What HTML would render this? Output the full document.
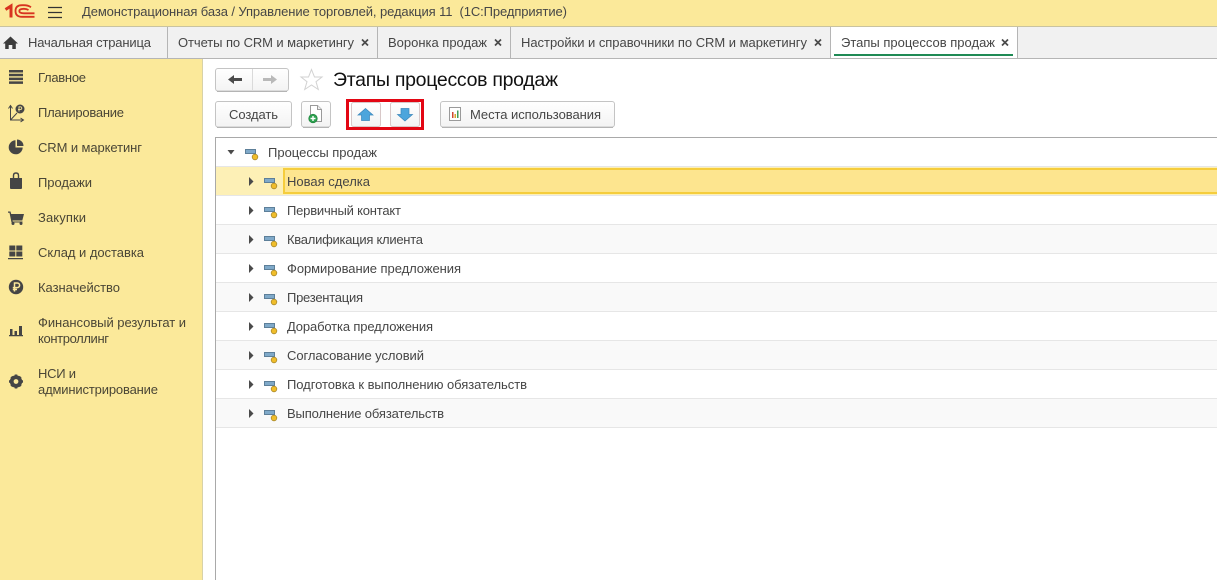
<!DOCTYPE html>
<html lang="ru"><head><meta charset="utf-8"><title>Этапы процессов продаж</title>
<style>
html,body{margin:0;padding:0;background:#fff;width:1217px;height:580px;overflow:hidden}
svg{display:block}
text{font-family:"Liberation Sans",sans-serif;font-size:13px;fill:#464646}
.s text{fill:#4a4636}
</style></head><body>
<svg width="1217" height="580" viewBox="0 0 1217 580" xmlns="http://www.w3.org/2000/svg">
<defs>
<linearGradient id="b" x1="0" y1="0" x2="0" y2="1"><stop offset="0" stop-color="#fff"/><stop offset="1" stop-color="#f3f3f3"/></linearGradient>
<g id="ic"><rect x="-4.500" y="-1.500" width="10" height="4" fill="#7fa9c9" stroke="#5d7f99" stroke-width="1"/><circle cx="5" cy="6" r="2.800" fill="#f0bd2a" stroke="#a98a2c" stroke-width=".8"/></g>
</defs>

<!-- header -->
<rect width="1217" height="26" fill="#fbe99a"/>
<rect y="26" width="1217" height="1" fill="#c9c3a0"/>
<g fill="none" stroke="#d8331f">
<path d="M5.500 9.500L11 6V17.500" stroke-width="3"/>
<path d="M31 7.200Q28 5.200 24 5.200H22Q15.500 5.200 15.500 11Q15.500 16.800 22 16.800H34.500" stroke-width="1.800"/>
<path d="M28.500 10Q26.500 8.800 24 8.800Q19.300 8.800 19.300 11Q19.300 13.300 24 13.300H34.500" stroke-width="1.800"/>
</g>
<path d="M48 7.500H62M48 12.500H62M48 17.500H62" stroke="#333" stroke-width="1.200" fill="none"/>
<text x="82" y="16" textLength="485" lengthAdjust="spacing">Демонстрационная база / Управление торговлей, редакция 11 &#160;(1С:Предприятие)</text>

<!-- tabs -->
<rect y="27" width="1217" height="31" fill="#f1f1f1"/>
<rect x="830" y="27" width="187" height="31" fill="#fff"/>
<rect y="58" width="1217" height="1" fill="#b5b5b5"/>
<path d="M167.500 27V58M377.500 27V58M510.500 27V58M830.500 27V58M1017.500 27V58" stroke="#b5b5b5" fill="none"/>
<path d="M3 43.500L10.500 36.500L18 43.500H15.800V49H12.300V45H8.700V49H5.200V43.500Z" fill="#3c3c3c"/>
<text x="28" y="47" textLength="123" lengthAdjust="spacing">Начальная страница</text>
<text x="178" y="47" textLength="176" lengthAdjust="spacing">Отчеты по CRM и маркетингу</text>
<text x="388" y="47" textLength="99" lengthAdjust="spacing">Воронка продаж</text>
<text x="521" y="47" textLength="286" lengthAdjust="spacing">Настройки и справочники по CRM и маркетингу</text>
<text x="841" y="47" textLength="154" lengthAdjust="spacing">Этапы процессов продаж</text>
<g stroke="#4a4a4a" stroke-width="1.700" fill="none">
<path d="M362 39.500l6 6m0-6l-6 6"/><path d="M495 39.500l6 6m0-6l-6 6"/><path d="M815 39.500l6 6m0-6l-6 6"/><path d="M1002 39.500l6 6m0-6l-6 6"/>
</g>
<rect x="834" y="54" width="179" height="2" fill="#1f8a55"/>

<!-- sidebar -->
<rect y="59" width="202" height="521" fill="#fbe99a"/>
<rect x="202" y="59" width="1" height="521" fill="#d8d2a8"/>
<g fill="#454545">
<!-- main -->
<path d="M9 70h14v2.500H9zM9 73.800h14v2.500H9zM9 77.600h14v2.500H9zM9 81.400h14v2.500H9z"/>
<!-- planning coin -->
<circle cx="20" cy="109" r="4.500"/>
<!-- bag -->
<path d="M10 178H22V188Q22 189 21 189H11Q10 189 10 188Z"/>
<!-- cart -->
<path d="M8 211.500H10.500L11.200 214H24L22.300 220.500H12.500L12.800 221.500H22.500V222.500H11.500L9.500 212.800H8Z"/>
<circle cx="13" cy="223.500" r="1.500"/><circle cx="21" cy="223.500" r="1.500"/>
<!-- warehouse -->
<path d="M9.300 245.500h6v5h-6zM16.300 245.500h6v5h-6zM9.300 251.500h6v5h-6zM16.300 251.500h6v5h-6zM8 258h15v1.300H8z"/>
<!-- ruble -->
<circle cx="16" cy="287" r="7.200"/>
<!-- bars -->
<path d="M10 329h2.500v6H10zM14.500 331h2.500v4h-2.500zM19 326h3v9h-3zM9 335h14v1.200H9z"/>
<!-- pie -->
<path d="M15.500 147.500V140.300A7 7 0 1 0 22.700 147.500Z"/>
<path d="M17 146V139.500A6.500 6.500 0 0 1 23.500 146Z"/>
</g>
<g fill="none" stroke="#454545">
<path d="M10.500 106V120H23" stroke-width="1"/>
<path d="M8.500 108.500L10.500 105.500L12.500 108.500M20.500 118L23.500 120L20.500 122M10.500 120L17 113" stroke-width="1"/>
<path d="M13.500 178.500V175.500Q13.500 173 16 173Q18.500 173 18.500 175.500V178.500" stroke-width="1.400"/>
</g>
<path d="M14.500 291.500V283H17.300a2.300 2.300 0 0 1 0 4.600H12.800M12.800 289.500H17" stroke="#fbe99a" stroke-width="1.500" fill="none"/>
<path d="M19 111.500V106.800H20.500a1.300 1.300 0 0 1 0 2.600H18" stroke="#fbe99a" fill="none" stroke-width=".9"/>
<g transform="translate(16 381.500)"><circle r="4.300" fill="none" stroke="#454545" stroke-width="3.800"/><path d="M-1.300-7h2.600v2.500h-2.600zM-1.300 4.500h2.600V7h-2.600zM-7-1.300h2.500v2.600H-7zM4.500-1.300H7v2.600H4.500zM-5.600-3.800L-3.800-5.600-2.300-4-4-2.300zM3.800-5.600L5.600-3.800 4-2.300 2.300-4zM-5.600 3.800L-3.800 5.600-2.300 4-4 2.300zM3.800 5.600L5.600 3.800 4 2.300 2.300 4z" fill="#454545"/></g>
<g class="s">
<text x="38" y="82" textLength="48" lengthAdjust="spacing">Главное</text>
<text x="38" y="117" textLength="86" lengthAdjust="spacing">Планирование</text>
<text x="38" y="152" textLength="104" lengthAdjust="spacing">CRM и маркетинг</text>
<text x="38" y="187" textLength="54" lengthAdjust="spacing">Продажи</text>
<text x="38" y="222" textLength="48" lengthAdjust="spacing">Закупки</text>
<text x="38" y="257" textLength="106" lengthAdjust="spacing">Склад и доставка</text>
<text x="38" y="292" textLength="82" lengthAdjust="spacing">Казначейство</text>
<text x="38" y="327" textLength="148" lengthAdjust="spacing">Финансовый результат и</text>
<text x="38" y="343" textLength="71" lengthAdjust="spacing">контроллинг</text>
<text x="38" y="378" textLength="38" lengthAdjust="spacing">НСИ и</text>
<text x="38" y="394" textLength="120" lengthAdjust="spacing">администрирование</text>
</g>

<!-- toolbar row 1 -->
<rect x="215.500" y="68.500" width="73" height="22.500" rx="2.500" fill="url(#b)" stroke="#c4c4c4"/>
<path d="M217 91.500H287" stroke="#b4b4b4"/>
<path d="M252.500 69V90" stroke="#dadada"/>
<path d="M228 79.500L234 75V78H242V81H234V84Z" fill="#4a4a4a"/>
<path d="M277 79.500L271 75V78H263V81H271V84Z" fill="#b9b9b9"/>
<path d="M311.500 69.500L314.500 77H322L316 81.700L318.300 89.500L311.500 85L304.700 89.500L307 81.700L301 77H308.500Z" fill="#fff" stroke="#d2d2d2"/>
<text x="333" y="86" textLength="225" lengthAdjust="spacing" style="font-size:19.500px;fill:#111">Этапы процессов продаж</text>

<!-- toolbar row 2 -->
<rect x="215.500" y="101.500" width="76" height="25.500" rx="2.500" fill="url(#b)" stroke="#c4c4c4"/><path d="M217 127.500H290" stroke="#b4b4b4"/>
<text x="229" y="119" textLength="49" lengthAdjust="spacing">Создать</text>
<rect x="301.500" y="101.500" width="29" height="25.500" rx="2.500" fill="url(#b)" stroke="#c4c4c4"/><path d="M303 127.500H329" stroke="#b4b4b4"/>
<path d="M310.500 105.500H317.500L321.500 109.500V121.500H310.500Z" fill="#fff" stroke="#9a9a9a"/><path d="M317.500 105.500V109.500H321.500" fill="#eee" stroke="#9a9a9a"/>
<circle cx="313" cy="118.500" r="4.300" fill="#2ca14f" stroke="#1c7f3a" stroke-width=".6"/><path d="M310.500 118.500h5M313 116v5" stroke="#fff" stroke-width="1.400"/>

<rect x="351.500" y="102.500" width="29" height="24" rx="2" fill="url(#b)" stroke="#d8c8c8"/>
<rect x="390.500" y="102.500" width="29" height="24" rx="2" fill="url(#b)" stroke="#d8c8c8"/>
<path d="M365.500 108.500L373 115H369.500V120.500H361.500V115H358Z" fill="#4ca5dc" stroke="#3a86bb" stroke-width=".7"/>
<path d="M405 121L412.500 114.500H409V108.500H401V114.500H397.500Z" fill="#4ca5dc" stroke="#3a86bb" stroke-width=".7"/>
<rect x="347.500" y="100.500" width="75" height="28" fill="none" stroke="#e30613" stroke-width="3"/>

<rect x="440.500" y="101.500" width="174" height="25.500" rx="2.500" fill="url(#b)" stroke="#c4c4c4"/><path d="M442 127.500H613" stroke="#b4b4b4"/>
<rect x="449.500" y="107.500" width="11" height="13" fill="#fff" stroke="#9a9a9a"/>
<path d="M452 112h1.500v6H452z" fill="#d04a35"/><path d="M454.500 114h1.500v4h-1.500z" fill="#d9a62b"/><path d="M457 110.500h1.500v7.500H457z" fill="#3f9e5a"/>
<text x="470" y="119" textLength="131" lengthAdjust="spacing">Места использования</text>

<!-- tree table -->
<rect x="215" y="137" width="1002" height="1" fill="#a9a9a9"/>
<rect x="215" y="137" width="1" height="443" fill="#a9a9a9"/>
<rect x="216" y="166" width="1001" height="1" fill="#e6e6e6"/>
<!-- rows -->
<rect x="216" y="167" width="1001" height="28" fill="#fdf0b6"/>
<rect x="284" y="168" width="933" height="26" fill="#fde58f"/>
<path d="M1217 169H284V193H1217" fill="none" stroke="#f5cd3d" stroke-width="2"/>
<rect x="216" y="225" width="1001" height="28" fill="#f9f9f9"/>
<rect x="216" y="283" width="1001" height="28" fill="#f9f9f9"/>
<rect x="216" y="341" width="1001" height="28" fill="#f9f9f9"/>
<rect x="216" y="399" width="1001" height="28" fill="#f9f9f9"/>
<path d="M216 195.500H1217M216 224.500H1217M216 253.500H1217M216 282.500H1217M216 311.500H1217M216 340.500H1217M216 369.500H1217M216 398.500H1217M216 427.500H1217" stroke="#e6e6e6" fill="none"/>
<path d="M227.500 150H234.500L231 154.500Z" fill="#4a4a4a"/>
<use href="#ic" x="250" y="151"/>
<text x="268" y="157" textLength="109" lengthAdjust="spacing">Процессы продаж</text>
<g fill="#4a4a4a">
<path d="M249 177V186L253.500 181.500Z"/><path d="M249 206V215L253.500 210.500Z"/><path d="M249 235V244L253.500 239.500Z"/><path d="M249 264V273L253.500 268.500Z"/><path d="M249 293V302L253.500 297.500Z"/><path d="M249 322V331L253.500 326.500Z"/><path d="M249 351V360L253.500 355.500Z"/><path d="M249 380V389L253.500 384.500Z"/><path d="M249 409V418L253.500 413.500Z"/>
</g>
<use href="#ic" x="269" y="180"/><use href="#ic" x="269" y="209"/><use href="#ic" x="269" y="238"/><use href="#ic" x="269" y="267"/><use href="#ic" x="269" y="296"/><use href="#ic" x="269" y="325"/><use href="#ic" x="269" y="354"/><use href="#ic" x="269" y="383"/><use href="#ic" x="269" y="412"/>
<text x="287" y="186" textLength="83" lengthAdjust="spacing">Новая сделка</text>
<text x="287" y="215" textLength="114" lengthAdjust="spacing">Первичный контакт</text>
<text x="287" y="244" textLength="136" lengthAdjust="spacing">Квалификация клиента</text>
<text x="287" y="273" textLength="174" lengthAdjust="spacing">Формирование предложения</text>
<text x="287" y="302" textLength="76" lengthAdjust="spacing">Презентация</text>
<text x="287" y="331" textLength="146" lengthAdjust="spacing">Доработка предложения</text>
<text x="287" y="360" textLength="137" lengthAdjust="spacing">Согласование условий</text>
<text x="287" y="389" textLength="240" lengthAdjust="spacing">Подготовка к выполнению обязательств</text>
<text x="287" y="418" textLength="157" lengthAdjust="spacing">Выполнение обязательств</text>
</svg>
</body></html>
